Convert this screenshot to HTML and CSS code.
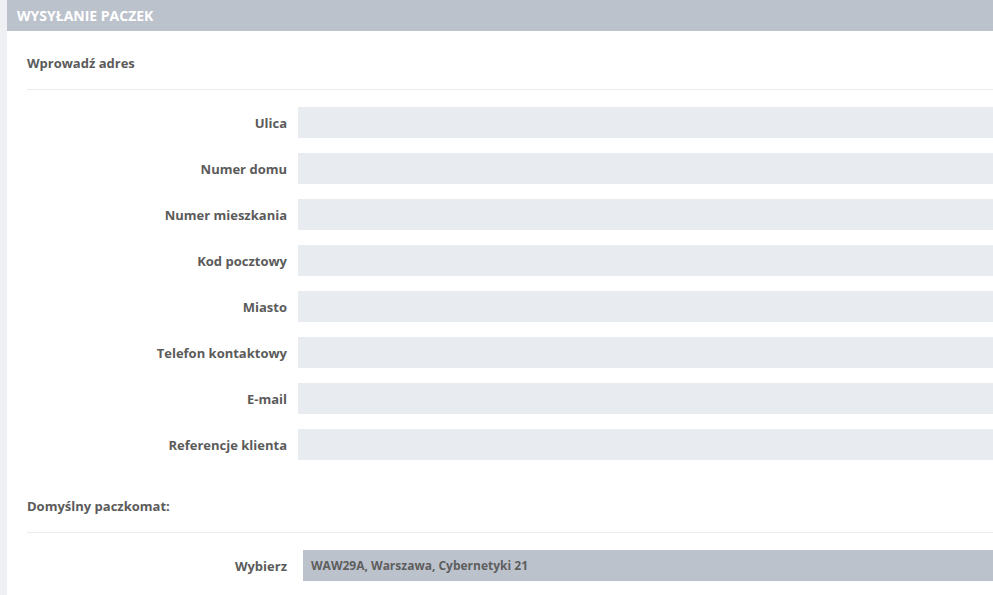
FILE: index.html
```html
<!DOCTYPE html>
<html lang="pl">
<head>
<meta charset="utf-8">
<title>Wysyłanie paczek</title>
<link rel="stylesheet" href="styles.css">
</head>
<body>
<div class="page">
  <div class="panel">
    <div class="panel-header">WYSYŁANIE PACZEK</div>
    <div class="panel-body">
      <div class="section-title">Wprowadź adres</div>
      <div class="form">
        <div class="row"><label class="lbl">Ulica</label><div class="input"></div></div>
        <div class="row"><label class="lbl">Numer domu</label><div class="input"></div></div>
        <div class="row"><label class="lbl">Numer mieszkania</label><div class="input"></div></div>
        <div class="row"><label class="lbl">Kod pocztowy</label><div class="input"></div></div>
        <div class="row"><label class="lbl">Miasto</label><div class="input"></div></div>
        <div class="row"><label class="lbl">Telefon kontaktowy</label><div class="input"></div></div>
        <div class="row"><label class="lbl">E-mail</label><div class="input"></div></div>
        <div class="row"><label class="lbl">Referencje klienta</label><div class="input"></div></div>
      </div>
      <div class="section-title second">Domyślny paczkomat:</div>
      <div class="row select-row"><label class="lbl lbl-select">Wybierz</label><div class="select">WAW29A, Warszawa, Cybernetyki 21</div></div>
    </div>
  </div>
</div>
</body>
</html>
```
FILE: styles.css
```css
html, body {
  margin: 0;
  padding: 0;
  background: #fff;
}
body {
  font-family: "Open Sans", "Liberation Sans", sans-serif;
  font-weight: 700;
  font-size: 13px;
  color: #5b5b5b;
}
.page {
  display: flex;
  background: #eef0f3;
  padding-left: 7px;
  min-height: 595px;
  box-sizing: border-box;
}
.panel {
  flex: 1;
  background: #fff;
}
.panel-header {
  height: 31px;
  background: #bcc2cc;
  color: #fff;
  font-size: 14px;
  line-height: 32px;
  padding-left: 10px;
}
.panel-body {
  padding-left: 20px;
}
.section-title {
  height: 58px;
  line-height: 64px;
  border-bottom: 1px solid #ebebeb;
}
.section-title.second {
  height: 72px;
  line-height: 93px;
}
.form {
  display: flex;
  flex-direction: column;
  gap: 15px;
  padding-top: 17px;
}
.row {
  display: flex;
  align-items: center;
  height: 31px;
}
.lbl {
  width: 260px;
  text-align: right;
  padding-right: 11px;
}
.input {
  flex: 1;
  height: 31px;
  background: #e8ebef;
}
.select-row {
  margin-top: 17px;
}
.lbl-select {
  width: 260px;
  padding-right: 16px;
}
.select {
  flex: 1;
  height: 31px;
  line-height: 32px;
  background: #bcc2cc;
  font-size: 12px;
  padding-left: 8px;
  color: #5e5e5e;
}
```
